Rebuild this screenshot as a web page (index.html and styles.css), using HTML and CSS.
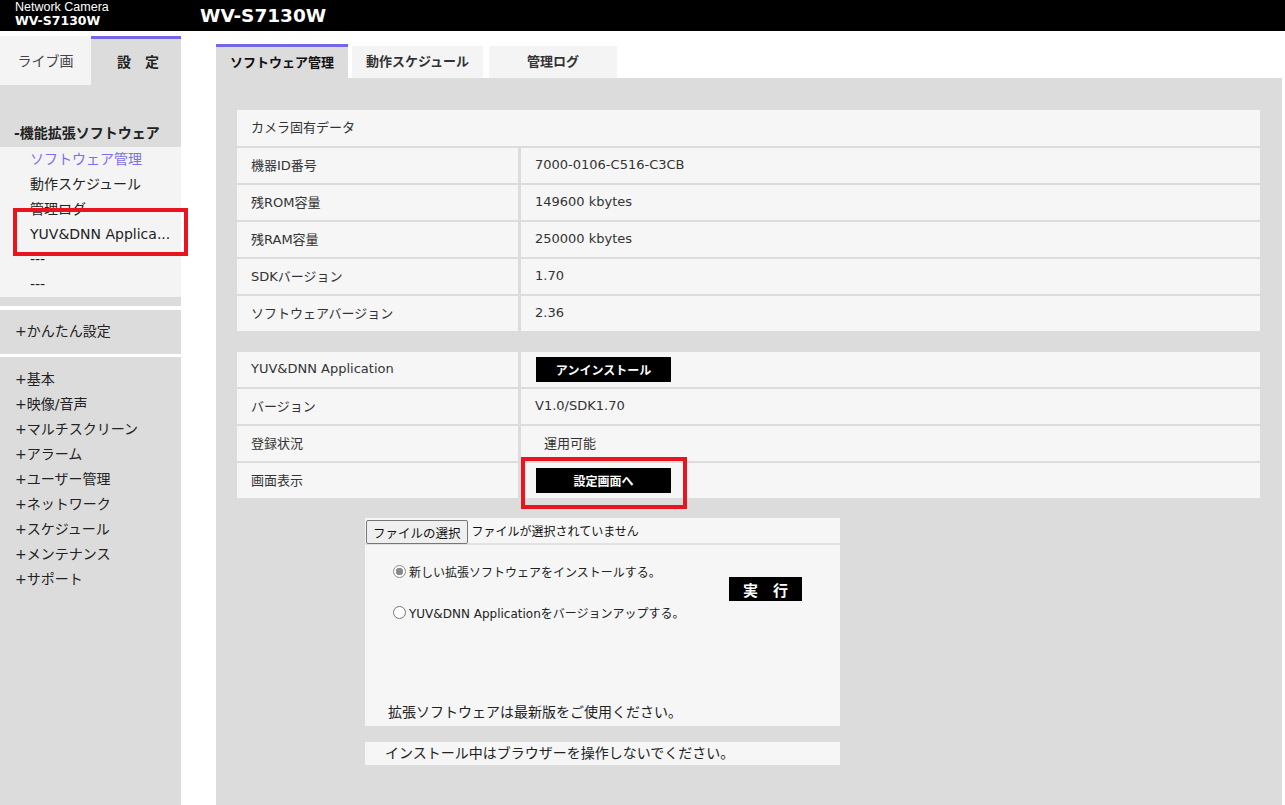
FILE: index.html
```html
<!DOCTYPE html>
<html lang="ja">
<head>
<meta charset="utf-8">
<title>WV-S7130W</title>
<link rel="stylesheet" href="styles.css">
</head>
<body>
<header class="topbar">
  <div class="brand">
    <div class="brand-small">Network Camera</div>
    <div class="brand-model">WV-S7130W</div>
  </div>
  <div class="title">WV-S7130W</div>
</header>
<div class="layout">
  <aside class="sidebar">
    <div class="side-tabs">
      <div class="side-tab live">ライブ画</div>
      <div class="side-tab active">設　定</div>
    </div>
    <div class="side-sec ext">
      <div class="sec-title">-機能拡張ソフトウェア</div>
      <ul class="sub-list">
        <li class="current">ソフトウェア管理</li>
        <li>動作スケジュール</li>
        <li>管理ログ</li>
        <li>YUV&amp;DNN Applica...</li>
        <li>---</li>
        <li>---</li>
      </ul>
      <div class="sec-foot"></div>
    </div>
    <div class="side-sec simple">+かんたん設定</div>
    <div class="side-sec menu">
      <ul class="menu-list">
        <li>+基本</li>
        <li>+映像/音声</li>
        <li>+マルチスクリーン</li>
        <li>+アラーム</li>
        <li>+ユーザー管理</li>
        <li>+ネットワーク</li>
        <li>+スケジュール</li>
        <li>+メンテナンス</li>
        <li>+サポート</li>
      </ul>
    </div>
  </aside>
  <main class="main">
    <nav class="tabs">
      <div class="tab active">ソフトウェア管理</div>
      <div class="tab t2">動作スケジュール</div>
      <div class="tab t3">管理ログ</div>
    </nav>
    <div class="panel">
      <div class="info-table">
        <div class="cell head">カメラ固有データ</div>
        <div class="cell">機器ID番号</div><div class="cell">7000-0106-C516-C3CB</div>
        <div class="cell">残ROM容量</div><div class="cell">149600 kbytes</div>
        <div class="cell">残RAM容量</div><div class="cell">250000 kbytes</div>
        <div class="cell">SDKバージョン</div><div class="cell">1.70</div>
        <div class="cell">ソフトウェアバージョン</div><div class="cell">2.36</div>
      </div>
      <div class="info-table app">
        <div class="cell">YUV&amp;DNN Application</div><div class="cell btn-cell"><span class="btn-black">アンインストール</span></div>
        <div class="cell">バージョン</div><div class="cell">V1.0/SDK1.70</div>
        <div class="cell">登録状況</div><div class="cell indent">運用可能</div>
        <div class="cell">画面表示</div><div class="cell btn-cell"><span class="btn-black">設定画面へ</span></div>
      </div>
      <div class="filebox">
        <div class="file-row">
          <span class="file-btn">ファイルの選択</span>
          <span class="file-name">ファイルが選択されていません</span>
        </div>
        <div class="opts-area">
          <div class="opts">
            <div class="radios">
              <div class="radio-row"><span class="radio checked"></span>新しい拡張ソフトウェアをインストールする。</div>
              <div class="radio-row"><span class="radio"></span>YUV&amp;DNN Applicationをバージョンアップする。</div>
            </div>
            <span class="btn-exec">実　行</span>
          </div>
          <div class="note">拡張ソフトウェアは最新版をご使用ください。</div>
        </div>
      </div>
      <div class="warnbox">インストール中はブラウザーを操作しないでください。</div>
    </div>
  </main>
</div>
<div class="mark mark-side"></div>
<div class="mark mark-btn"></div>
</body>
</html>
```

FILE: styles.css
```css
html, body {
  margin: 0;
  padding: 0;
  background: #ffffff;
}
body {
  font-family: "DejaVu Sans", "Noto Sans CJK JP", sans-serif;
  font-size: 13px;
  color: #222;
  position: relative;
  width: 1285px;
  height: 805px;
  overflow: hidden;
}
ul {
  list-style: none;
  margin: 0;
  padding: 0;
}

/* header */
.topbar {
  height: 31px;
  background: #000;
  color: #fff;
  display: flex;
  align-items: center;
}
.brand {
  width: 185px;
  padding-left: 15px;
  align-self: flex-start;
  padding-top: 1px;
}
.brand-small {
  font-family: "Liberation Sans", Arial, sans-serif;
  font-size: 12.5px;
  line-height: 13px;
}
.brand-model {
  font-family: "DejaVu Sans", sans-serif;
  font-weight: bold;
  font-size: 12.5px;
  line-height: 14px;
}
.title {
  font-family: "DejaVu Sans", sans-serif;
  font-weight: bold;
  font-size: 18.5px;
  line-height: 31px;
}

/* layout */
.layout {
  display: flex;
  height: 774px;
}

/* sidebar */
.sidebar {
  width: 181px;
  display: flex;
  flex-direction: column;
  padding-top: 5px;
  font-size: 14px;
  color: #222;
}
.side-tabs {
  display: flex;
  height: 49px;
}
.side-tab {
  display: flex;
  align-items: center;
  justify-content: center;
  box-sizing: border-box;
  padding-bottom: 1px;
}
.side-tab.live {
  width: 91px;
  background: #f4f4f4;
  color: #444;
}
.side-tab.active {
  width: 90px;
  background: #dcdcdc;
  border-top: 3px solid #7367e6;
  font-weight: bold;
  color: #222;
  padding-bottom: 2px;
  padding-left: 4px;
}
.side-sec {
  background: #dcdcdc;
}
.sec-title {
  padding: 38px 0 4px 14px;
  line-height: 20px;
  font-weight: bold;
  color: #222;
}
.sub-list {
  background: #f4f4f4;
}
.sub-list li {
  height: 25px;
  line-height: 25px;
  padding-left: 30px;
  color: #222;
}
.sub-list li.current {
  color: #7b70ea;
}
.sec-foot {
  height: 9px;
}
.side-sec.simple {
  margin-top: 4px;
  padding: 11px 0 13px 15px;
  line-height: 20px;
}
.side-sec.menu {
  margin-top: 3px;
  flex: 1;
  padding-top: 10px;
}
.menu-list li {
  height: 25px;
  line-height: 25px;
  padding-left: 15px;
}

/* main */
.main {
  margin-left: 35px;
  width: 1066px;
  display: flex;
  flex-direction: column;
  padding-top: 13px;
}
.tabs {
  display: flex;
  align-items: flex-end;
  height: 34px;
}
.tab {
  box-sizing: border-box;
  height: 32px;
  background: #f4f4f4;
  display: flex;
  align-items: center;
  justify-content: center;
  font-weight: bold;
  font-size: 13px;
  color: #333;
  padding-bottom: 3px;
}
.tab.active {
  width: 132px;
  height: 34px;
  background: #dcdcdc;
  border-top: 3px solid #7367e6;
  color: #111;
}
.tab.t2 {
  width: 131px;
  margin-left: 4px;
}
.tab.t3 {
  width: 128px;
  margin-left: 6px;
}
.panel {
  flex: 1;
  background: #dcdcdc;
  padding: 32px 22px 0 21px;
}

/* tables */
.info-table {
  display: grid;
  grid-template-columns: 281px 1fr;
  column-gap: 3px;
  row-gap: 2px;
}
.info-table.app {
  margin-top: 21px;
}
.cell {
  box-sizing: border-box;
  background: #f6f6f6;
  height: 35px;
  display: flex;
  align-items: center;
  padding-left: 14px;
  padding-bottom: 3px;
  color: #333;
}
.cell.head {
  grid-column: 1 / -1;
  height: 36px;
}
.cell.indent {
  padding-left: 23px;
}
.btn-cell {
  padding-left: 15px;
  padding-bottom: 0;
}
.btn-black {
  width: 135px;
  height: 25px;
  background: #000;
  color: #fff;
  font-weight: bold;
  font-size: 12px;
  display: flex;
  align-items: center;
  justify-content: center;
}

/* file box */
.filebox {
  margin-top: 20px;
  margin-left: 128px;
  width: 475px;
  background: #f6f6f6;
}
.file-row {
  height: 27px;
  box-sizing: border-box;
  padding: 2px 1px 0;
  display: flex;
  align-items: flex-start;
  border-bottom: 2px solid #e2e2e2;
  font-size: 12px;
}
.file-btn {
  box-sizing: border-box;
  height: 24px;
  padding: 0 6px;
  border: 1px solid #767676;
  border-radius: 2px;
  background: #efefef;
  color: #111;
  display: flex;
  align-items: center;
  font-size: 12.5px;
}
.file-name {
  line-height: 24px;
  margin-left: 4px;
  color: #111;
}
.opts-area {
  height: 181px;
  box-sizing: border-box;
  display: flex;
  flex-direction: column;
  padding: 16px 0 4px 0;
}
.opts {
  display: flex;
  align-items: center;
  padding-left: 28px;
  padding-right: 38px;
}
.radios {
  display: flex;
  flex-direction: column;
  row-gap: 21px;
}
.radio-row {
  height: 20px;
  display: flex;
  align-items: center;
  font-size: 12px;
  color: #222;
}
.radio {
  box-sizing: border-box;
  width: 13px;
  height: 13px;
  border-radius: 50%;
  border: 1px solid #767676;
  background: #fff;
  margin-right: 3px;
}
.radio.checked {
  border-color: #8a8a8a;
  background: radial-gradient(circle, #8a8a8a 0 3.5px, #fff 4px);
}
.btn-exec {
  margin-left: auto;
  width: 73px;
  height: 24px;
  background: #000;
  color: #fff;
  font-weight: bold;
  font-size: 15px;
  display: flex;
  align-items: center;
  justify-content: center;
  margin-top: -5px;
}
.note {
  margin-top: auto;
  padding-left: 23px;
  line-height: 20px;
  font-size: 14px;
  color: #222;
}
.warnbox {
  margin-top: 16px;
  margin-left: 128px;
  width: 475px;
  box-sizing: border-box;
  height: 23px;
  background: #f6f6f6;
  padding-left: 20px;
  line-height: 23px;
  font-size: 14px;
  color: #222;
}

/* red highlight marks */
.mark {
  position: absolute;
  box-sizing: border-box;
  border: 4px solid #e8141e;
}
.mark-side {
  left: 13px;
  top: 208px;
  width: 175px;
  height: 48px;
}
.mark-btn {
  left: 521px;
  top: 457px;
  width: 166px;
  height: 52px;
}
```
